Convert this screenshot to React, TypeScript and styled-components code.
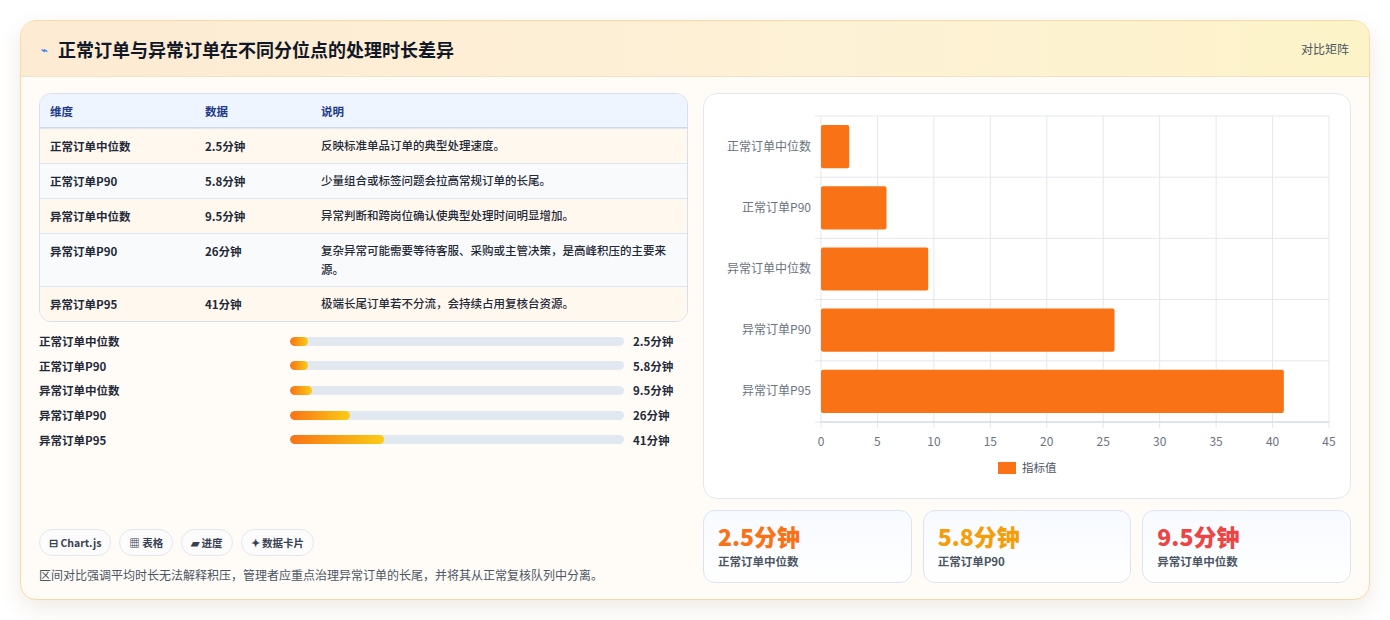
import React from "react";
import styled, { createGlobalStyle } from "styled-components";

const Global = createGlobalStyle`
  html, body { margin: 0; background: #ffffff; }
  body { font-family: "Noto Sans CJK SC", "Noto Sans", sans-serif; }
`;

const Page = styled.div`
  padding: 20px;
`;

const Card = styled.div`
  width: 1350px;
  height: 580px;
  box-sizing: border-box;
  border: 1px solid #fbd9a8;
  border-radius: 16px;
  background: #fffcf8;
  box-shadow: 0 8px 22px rgba(120, 90, 40, 0.12);
  overflow: hidden;
  display: flex;
  flex-direction: column;
`;

const Header = styled.div`
  height: 56px;
  flex: none;
  box-sizing: border-box;
  padding: 0 20px;
  display: flex;
  align-items: center;
  justify-content: space-between;
  background: linear-gradient(90deg, #fdebd3 0%, #fdf1d6 60%, #fdf3c8 100%);
  border-bottom: 1px solid #f4e2c6;
`;

const Title = styled.h1`
  margin: 0;
  font-size: 18px;
  font-weight: 700;
  color: #111827;
  display: flex;
  align-items: center;
  gap: 10px;
`;

const Tag = styled.span`
  font-size: 12px;
  color: #4b5563;
`;

const Body = styled.div`
  flex: 1;
  display: grid;
  grid-template-columns: 649px 648px;
  gap: 15px;
  padding: 16px 18px 18px 18px;
`;

const LeftCol = styled.div`
  display: flex;
  flex-direction: column;
`;

const Table = styled.div`
  border: 1px solid #d5dfee;
  border-radius: 12px;
  overflow: hidden;
  font-size: 11.5px;
`;

const Row = styled.div<{ $bg: string; $h?: number }>`
  display: grid;
  grid-template-columns: 155px 116px 1fr;
  align-items: start;
  min-height: ${p => p.$h ?? 35}px;
  box-sizing: border-box;
  padding: 9px 10px 0 10px;
  background: ${p => p.$bg};
  border-top: 1px solid #dfe6f0;
  color: #1f2937;
  font-weight: 600;
  &:first-child { border-top: none; }
`;

const HeadRow = styled(Row)`
  color: #1e3a8a;
  border-bottom: 1px solid #cdd8ea;
`;

const Desc = styled.div`
  font-weight: 500;
  line-height: 19px;
  margin-top: -2px;
  padding-right: 10px;
`;

const Bars = styled.div`
  display: flex;
  flex-direction: column;
  gap: 6px;
  margin-top: 10px;
`;

const BarRow = styled.div`
  display: grid;
  grid-template-columns: 242px 334px 1fr;
  column-gap: 9px;
  align-items: center;
  height: 18.6px;
  font-size: 11.5px;
  font-weight: 700;
  color: #1f2937;
`;

const Track = styled.div`
  height: 9px;
  border-radius: 5px;
  background: #e2e8f0;
  overflow: hidden;
`;

const Fill = styled.div`
  height: 100%;
  border-radius: 5px;
  background: linear-gradient(90deg, #f97316, #facc15);
`;

const Footer = styled.div`
  margin-top: auto;
  display: flex;
  flex-direction: column;
  gap: 10px;
`;

const Chips = styled.div`
  display: flex;
  gap: 8px;
`;

const Chip = styled.span`
  font-size: 10.5px;
  font-weight: 600;
  color: #374151;
  padding: 5px 9px;
  border: 1px solid #e2e6ee;
  border-radius: 14px;
  background: #fcfcfd;
`;

const Note = styled.p`
  margin: 0;
  font-size: 12px;
  color: #4b5563;
`;

const RightCol = styled.div`
  display: flex;
  flex-direction: column;
  gap: 11px;
`;

const ChartPanel = styled.div`
  height: 404px;
  border: 1px solid #e3e8f0;
  border-radius: 14px;
  background: #ffffff;
`;

const Stats = styled.div`
  display: grid;
  grid-template-columns: repeat(3, 1fr);
  gap: 11px;
`;

const Stat = styled.div`
  height: 73px;
  box-sizing: border-box;
  border: 1px solid #dbe5f2;
  border-radius: 12px;
  background: linear-gradient(180deg, #f7faff, #ffffff);
  padding: 8px 14px;
`;

const StatValue = styled.div<{ $c: string }>`
  font-size: 23px;
  font-weight: 800;
  color: ${p => p.$c};
  line-height: 34px;
`;

const StatLabel = styled.div`
  font-size: 11.5px;
  color: #4b5563;
  font-weight: 600;
`;

const rows = [
  ["正常订单中位数", "2.5分钟", "反映标准单品订单的典型处理速度。"],
  ["正常订单P90", "5.8分钟", "少量组合或标签问题会拉高常规订单的长尾。"],
  ["异常订单中位数", "9.5分钟", "异常判断和跨岗位确认使典型处理时间明显增加。"],
  ["异常订单P90", "26分钟", "复杂异常可能需要等待客服、采购或主管决策，是高峰积压的主要来源。"],
  ["异常订单P95", "41分钟", "极端长尾订单若不分流，会持续占用复核台资源。"],
];
const values = [2.5, 5.8, 9.5, 26, 41];

const Chart = () => {
  const x0 = 117, x1 = 625, y0 = 22, y1 = 328;
  const sx = (v: number) => x0 + (v / 45) * (x1 - x0);
  const band = (y1 - y0) / 5;
  return (
    <svg width="648" height="404" style={{ display: "block" }} fontFamily='"Noto Sans CJK SC", sans-serif'>
      {Array.from({ length: 10 }, (_, i) => (
        <g key={i}>
          <line x1={sx(i * 5)} x2={sx(i * 5)} y1={y0} y2={y1 + 6} stroke="#e5e7eb" />
          <text x={sx(i * 5)} y={352} fontSize="12" fill="#6b7280" textAnchor="middle">{i * 5}</text>
        </g>
      ))}
      {Array.from({ length: 6 }, (_, i) => (
        <line key={i} x1={x0 - 6} x2={x1} y1={y0 + i * band} y2={y0 + i * band} stroke="#e5e7eb" />
      ))}
      <line x1={x0} x2={x1} y1={y1} y2={y1} stroke="#cbd5e1" />
      {values.map((v, i) => (
        <g key={i}>
          <rect x={x0} y={y0 + i * band + 9} width={sx(v) - x0} height={band - 18} fill="#f97316" rx="2" />
          <text x={x0 - 10} y={y0 + i * band + band / 2 + 4} fontSize="12" fill="#6b7280" textAnchor="end">{rows[i][0]}</text>
        </g>
      ))}
      <rect x={294} y={368} width={18} height={12} fill="#f97316" />
      <text x={318} y={378} fontSize="11.5" fill="#4b5563">指标值</text>
    </svg>
  );
};

export default function App() {
  return (
    <Page>
      <Global />
      <Card>
        <Header>
          <Title><span style={{ fontSize: 11, color: "#3b82f6" }}>⌁</span>正常订单与异常订单在不同分位点的处理时长差异</Title>
          <Tag>对比矩阵</Tag>
        </Header>
        <Body>
          <LeftCol>
            <Table>
              <HeadRow $bg="#eef5fe" $h={34}><div>维度</div><div>数据</div><div>说明</div></HeadRow>
              {rows.map((r, i) => (
                <Row key={i} $bg={i % 2 ? "#f8fafc" : "#fff8ef"} $h={i === 3 ? 53 : 35}>
                  <div>{r[0]}</div><div>{r[1]}</div><Desc>{r[2]}</Desc>
                </Row>
              ))}
            </Table>
            <Bars>
              {rows.map((r, i) => (
                <BarRow key={i}>
                  <div>{r[0]}</div>
                  <Track><Fill style={{ width: `${Math.max(values[i] / 145, 0.055) * 100}%` }} /></Track>
                  <div>{r[1]}</div>
                </BarRow>
              ))}
            </Bars>
            <Footer>
              <Chips>
                <Chip>⊟ Chart.js</Chip>
                <Chip>▦ 表格</Chip>
                <Chip>▰ 进度</Chip>
                <Chip>✦ 数据卡片</Chip>
              </Chips>
              <Note>区间对比强调平均时长无法解释积压，管理者应重点治理异常订单的长尾，并将其从正常复核队列中分离。</Note>
            </Footer>
          </LeftCol>
          <RightCol>
            <ChartPanel><Chart /></ChartPanel>
            <Stats>
              <Stat><StatValue $c="#f97316">2.5分钟</StatValue><StatLabel>正常订单中位数</StatLabel></Stat>
              <Stat><StatValue $c="#f59e0b">5.8分钟</StatValue><StatLabel>正常订单P90</StatLabel></Stat>
              <Stat><StatValue $c="#ef4444">9.5分钟</StatValue><StatLabel>异常订单中位数</StatLabel></Stat>
            </Stats>
          </RightCol>
        </Body>
      </Card>
    </Page>
  );
}
